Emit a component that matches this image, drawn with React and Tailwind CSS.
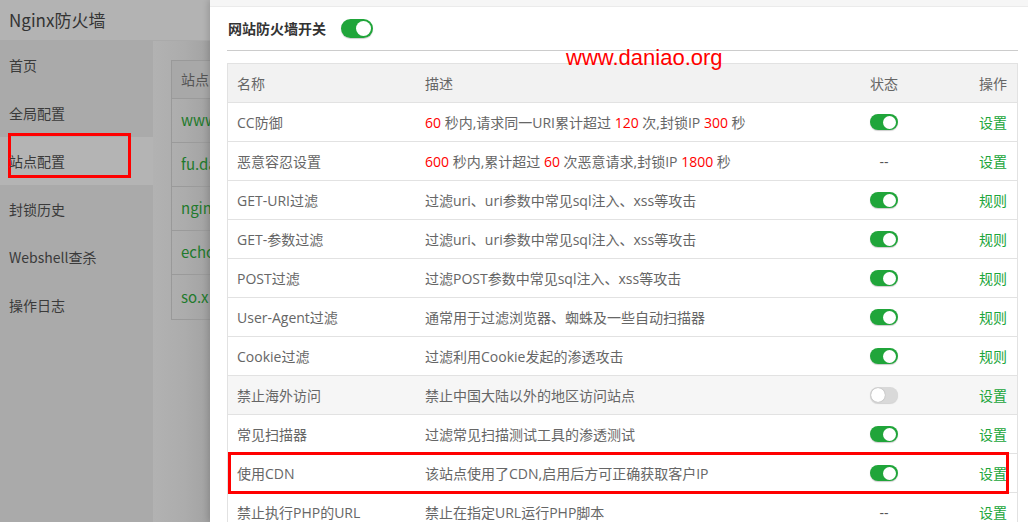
import React from "react";

const F = { fontFamily: '"Noto Sans CJK SC", "Open Sans", sans-serif' };
const T = { fontFamily: '"Open Sans", "Noto Sans CJK SC", sans-serif' };

function Toggle({ on }) {
  return on ? (
    <span className="inline-flex items-center w-[28px] h-[16px] rounded-full bg-[#20a53a] shadow-[0_1px_1px_rgba(0,0,0,0.2)]">
      <span className="ml-[13px] w-[13px] h-[13px] rounded-full bg-white" />
    </span>
  ) : (
    <span className="inline-flex items-center w-[28px] h-[16px] rounded-full bg-[#d9d9d9] shadow-[0_1px_1px_rgba(0,0,0,0.15)]">
      <span className="ml-[1px] w-[14px] h-[14px] rounded-full bg-white shadow-[0_0_1px_rgba(0,0,0,0.4)]" />
    </span>
  );
}

const R = ({ children }) => <span className="text-[#f00]">{children}</span>;

const rows = [
  { name: "CC防御", desc: <><R>60</R> 秒内,请求同一URI累计超过 <R>120</R> 次,封锁IP <R>300</R> 秒</>, st: "on", op: "设置" },
  { name: "恶意容忍设置", desc: <><R>600</R> 秒内,累计超过 <R>60</R> 次恶意请求,封锁IP <R>1800</R> 秒</>, st: "--", op: "设置" },
  { name: "GET-URI过滤", desc: "过滤uri、uri参数中常见sql注入、xss等攻击", st: "on", op: "规则" },
  { name: "GET-参数过滤", desc: "过滤uri、uri参数中常见sql注入、xss等攻击", st: "on", op: "规则" },
  { name: "POST过滤", desc: "过滤POST参数中常见sql注入、xss等攻击", st: "on", op: "规则" },
  { name: "User-Agent过滤", desc: "通常用于过滤浏览器、蜘蛛及一些自动扫描器", st: "on", op: "规则" },
  { name: "Cookie过滤", desc: "过滤利用Cookie发起的渗透攻击", st: "on", op: "规则" },
  { name: "禁止海外访问", desc: "禁止中国大陆以外的地区访问站点", st: "off", op: "设置", hover: true },
  { name: "常见扫描器", desc: "过滤常见扫描测试工具的渗透测试", st: "on", op: "设置" },
  { name: "使用CDN", desc: "该站点使用了CDN,启用后方可正确获取客户IP", st: "on", op: "设置", boxed: true },
  { name: "禁止执行PHP的URL", desc: "禁止在指定URL运行PHP脚本", st: "--", op: "设置" },
];

const menu = ["首页", "全局配置", "站点配置", "封锁历史", "Webshell查杀", "操作日志"];
const sites = ["www", "fu.da", "ngin", "echo", "so.x"];

export default function App() {
  return (
    <div className="w-[1028px] h-[522px] overflow-hidden flex bg-[#b0b0b0]" style={F}>
      {/* dimmed background app */}
      <div className="w-[210px] shrink-0 flex flex-col">
        <div className="h-[41px] shrink-0 bg-[#b3b3b3] border-b border-[#aaaaaa] flex items-center pl-[9px] text-[17px] text-[#333]">
          Nginx防火墙
        </div>
        <div className="flex flex-1">
          <div className="w-[153px] shrink-0 flex flex-col">
            {menu.map((m, i) => (
              <div
                key={m}
                className={`h-[48px] shrink-0 flex items-center pl-[9px] text-[14px] text-[#3a3a3a] relative ${i === 2 ? "bg-[#b4b4b4]" : "bg-[#aaaaaa]"}`}
              >
                {i === 2 && (
                  <span className="absolute left-[8px] top-[-4px] w-[123px] h-[45px] border-[3px] border-[#f00]" />
                )}
                <span className="relative">{m}</span>
              </div>
            ))}
            <div className="flex-1 bg-[#aaaaaa]" />
          </div>
          <div className="flex-1 pl-[18px] pt-[19px] bg-gradient-to-r from-[#b2b2b2] via-[#acacac] to-[#9f9f9f]">
            <div className="border border-[#999] border-r-0">
              <div className="h-[38px] bg-[#a8a8a8] flex items-center pl-[9px] text-[14px] text-[#555] border-b border-[#9a9a9a]">站点</div>
              {sites.map((s) => (
                <div key={s} className="h-[44px] flex items-center pl-[9px] text-[15px] text-[#1f7a2c] border-b border-[#9a9a9a] last:border-b-0 overflow-hidden whitespace-nowrap">
                  {s}
                </div>
              ))}
            </div>
          </div>
        </div>
      </div>

      {/* panel */}
      <div className="flex-1 bg-white flex flex-col relative shadow-[-2px_0_6px_rgba(0,0,0,0.15)]">
        <div className="h-[7px] shrink-0 bg-[#f6f6f6] border-b border-[#ebebeb]" />
        <div className="pl-[17px] pr-[10px] flex flex-col">
          <div className="h-[44px] flex items-center gap-[15px] border-b border-[#ccc]">
            <span className="text-[14px] font-bold text-[#333] pl-[1px]">网站防火墙开关</span>
            <span className="inline-flex items-center w-[32px] h-[19px] rounded-full bg-[#20a53a] shadow-[0_1px_1px_rgba(0,0,0,0.2)]">
              <span className="ml-[15px] w-[15px] h-[15px] rounded-full bg-white" />
            </span>
          </div>
          <div className="mt-[12px] border border-[#e2e2e2] border-b-0 text-[14px] text-[#666]" style={T}>
            <div className="h-[39px] bg-[#f2f2f2] flex items-center border-b border-[#e2e2e2]">
              <div className="w-[197px] pl-[9px]">名称</div>
              <div className="flex-1">描述</div>
              <div className="w-[60px] text-center">状态</div>
              <div className="w-[103px] text-right pr-[10px]">操作</div>
            </div>
            {rows.map((r) => (
              <div
                key={r.name}
                className={`h-[39px] flex items-center border-b border-[#e2e2e2] relative ${r.hover ? "bg-[#f6f6f6]" : ""}`}
              >
                {r.boxed && (
                  <span className="absolute left-[0px] top-[-2px] w-[781px] h-[42px] border-[3px] border-[#f00] pointer-events-none" />
                )}
                <div className="w-[197px] pl-[9px] whitespace-nowrap">{r.name}</div>
                <div className="flex-1 whitespace-nowrap">{r.desc}</div>
                <div className="w-[60px] flex justify-center">
                  {r.st === "--" ? <span className="text-[#555]">--</span> : <Toggle on={r.st === "on"} />}
                </div>
                <div className="w-[103px] text-right pr-[10px] text-[#20a53a]">{r.op}</div>
              </div>
            ))}
          </div>
        </div>
        <div className="absolute left-[356px] top-[47px] text-[22px] text-[#f00] leading-none" style={{ fontFamily: '"Liberation Sans", Arial, sans-serif' }}>
          www.daniao.org
        </div>
      </div>
    </div>
  );
}
